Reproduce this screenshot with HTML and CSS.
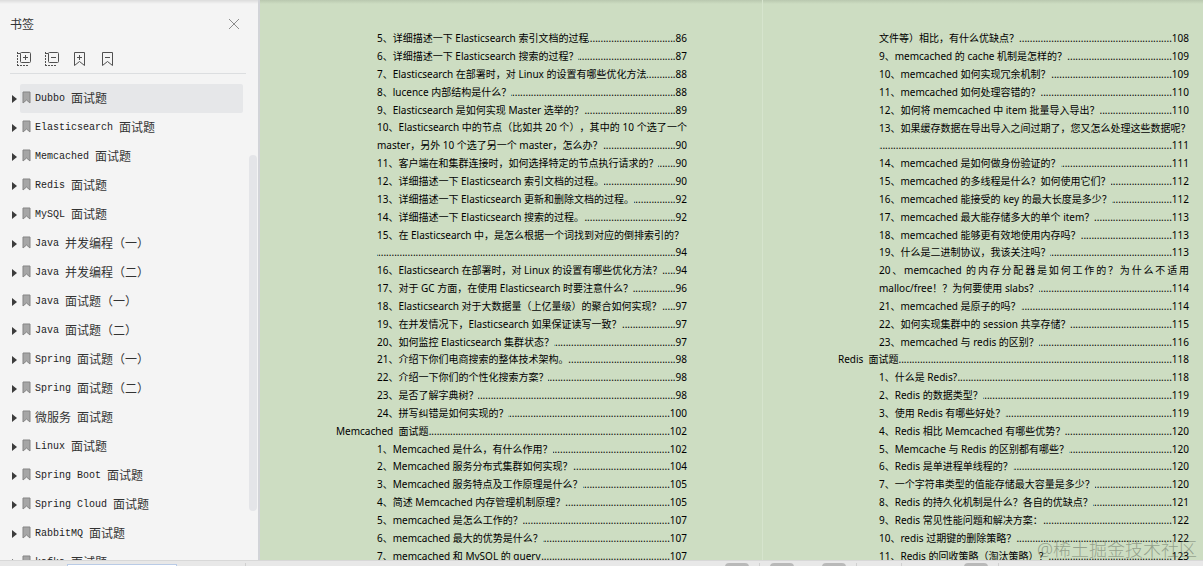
FILE: index.html
```html
<!DOCTYPE html>
<html lang="zh-CN">
<head>
  <meta charset="UTF-8">
  <meta name="viewport" content="width=device-width, initial-scale=1.0">
  <title>书签</title>
  <link rel="stylesheet" href="styles.css">
</head>
<body>
<!-- Shared icons -->
<svg class="sprite" aria-hidden="true">
  <symbol id="mark" viewBox="0 0 9 13">
    <path d="M1 1h7v11L4.500 9 1 12z" fill="#a6a6a6" stroke="#858585"/>
  </symbol>
  <symbol id="arrow" viewBox="0 0 5 8">
    <path d="M0 0l5 4-5 4z" fill="#3c3c3c"/>
  </symbol>
</svg>

<div class="viewer">
  <aside class="sidebar">
    <header class="side-head">
      <h1>书签</h1>
      <button class="close" aria-label="关闭">
        <svg width="12" height="12" viewBox="0 0 12 12"><path d="M1 1l10 10M11 1L1 11" stroke="#8c8c8c" fill="none"/></svg>
      </button>
    </header>

    <div class="tools">
      <button aria-label="展开">
        <svg width="16" height="16" viewBox="0 0 16 16" fill="none" stroke="#505050">
          <rect x="4.500" y="1.500" width="10" height="10" rx="1"/>
          <path d="M7 6.500h5M9.500 4v5"/>
          <path d="M1.500 1v14M1 14.500h11" stroke-dasharray="2 1"/><path d="M1 2.500h3"/>
        </svg>
      </button>
      <button aria-label="折叠">
        <svg width="16" height="16" viewBox="0 0 16 16" fill="none" stroke="#505050">
          <rect x="4.500" y="1.500" width="10" height="10" rx="1"/>
          <path d="M7 6.500h5"/>
          <path d="M1.500 1v14M1 14.500h11" stroke-dasharray="2 1"/><path d="M1 2.500h3"/>
        </svg>
      </button>
      <button aria-label="添加书签">
        <svg width="16" height="16" viewBox="0 0 16 16" fill="none" stroke="#505050">
          <path d="M2.500 1.500h10v13l-5-4-5 4zM5 6.500h5M7.500 4v5"/>
        </svg>
      </button>
      <button aria-label="删除书签">
        <svg width="16" height="16" viewBox="0 0 16 16" fill="none" stroke="#505050">
          <path d="M2.500 1.500h10v13l-5-4-5 4zM5 6.500h5"/>
        </svg>
      </button>
    </div>

    <ul class="tree">
      <li><svg class="arrow"><use href="#arrow"/></svg><a href="#" class="active"><svg class="mark"><use href="#mark"/></svg><span class="en">Dubbo </span>面试题</a></li>
      <li><svg class="arrow"><use href="#arrow"/></svg><a href="#"><svg class="mark"><use href="#mark"/></svg><span class="en">Elasticsearch </span>面试题</a></li>
      <li><svg class="arrow"><use href="#arrow"/></svg><a href="#"><svg class="mark"><use href="#mark"/></svg><span class="en">Memcached </span>面试题</a></li>
      <li><svg class="arrow"><use href="#arrow"/></svg><a href="#"><svg class="mark"><use href="#mark"/></svg><span class="en">Redis </span>面试题</a></li>
      <li><svg class="arrow"><use href="#arrow"/></svg><a href="#"><svg class="mark"><use href="#mark"/></svg><span class="en">MySQL </span>面试题</a></li>
      <li><svg class="arrow"><use href="#arrow"/></svg><a href="#"><svg class="mark"><use href="#mark"/></svg><span class="en">Java </span>并发编程（一）</a></li>
      <li><svg class="arrow"><use href="#arrow"/></svg><a href="#"><svg class="mark"><use href="#mark"/></svg><span class="en">Java </span>并发编程（二）</a></li>
      <li><svg class="arrow"><use href="#arrow"/></svg><a href="#"><svg class="mark"><use href="#mark"/></svg><span class="en">Java </span>面试题（一）</a></li>
      <li><svg class="arrow"><use href="#arrow"/></svg><a href="#"><svg class="mark"><use href="#mark"/></svg><span class="en">Java </span>面试题（二）</a></li>
      <li><svg class="arrow"><use href="#arrow"/></svg><a href="#"><svg class="mark"><use href="#mark"/></svg><span class="en">Spring </span>面试题（一）</a></li>
      <li><svg class="arrow"><use href="#arrow"/></svg><a href="#"><svg class="mark"><use href="#mark"/></svg><span class="en">Spring </span>面试题（二）</a></li>
      <li><svg class="arrow"><use href="#arrow"/></svg><a href="#"><svg class="mark"><use href="#mark"/></svg>微服务<span class="en"> </span>面试题</a></li>
      <li><svg class="arrow"><use href="#arrow"/></svg><a href="#"><svg class="mark"><use href="#mark"/></svg><span class="en">Linux </span>面试题</a></li>
      <li><svg class="arrow"><use href="#arrow"/></svg><a href="#"><svg class="mark"><use href="#mark"/></svg><span class="en">Spring Boot </span>面试题</a></li>
      <li><svg class="arrow"><use href="#arrow"/></svg><a href="#"><svg class="mark"><use href="#mark"/></svg><span class="en">Spring Cloud </span>面试题</a></li>
      <li><svg class="arrow"><use href="#arrow"/></svg><a href="#"><svg class="mark"><use href="#mark"/></svg><span class="en">RabbitMQ </span>面试题</a></li>
      <li><svg class="arrow"><use href="#arrow"/></svg><a href="#"><svg class="mark"><use href="#mark"/></svg><span class="en">kafka </span>面试题</a></li>
    </ul>
    <div class="scroll-thumb"></div>
  </aside>

  <main class="pages">
    <section class="page">
      <ol class="toc">
        <li><span>5、详细描述一下 Elasticsearch 索引文档的过程</span><i></i><b>86</b></li>
        <li><span>6、详细描述一下 Elasticsearch 搜索的过程？</span><i></i><b>87</b></li>
        <li><span>7、Elasticsearch 在部署时，对 Linux 的设置有哪些优化方法</span><i></i><b>88</b></li>
        <li><span>8、lucence 内部结构是什么？</span><i></i><b>88</b></li>
        <li><span>9、Elasticsearch 是如何实现 Master 选举的？</span><i></i><b>89</b></li>
        <li class="full">10、Elasticsearch 中的节点（比如共 20 个），其中的 10 个选了一个</li>
        <li><span>master，另外 10 个选了另一个 master，怎么办？</span><i></i><b>90</b></li>
        <li><span>11、客户端在和集群连接时，如何选择特定的节点执行请求的？</span><i></i><b>90</b></li>
        <li><span>12、详细描述一下 Elasticsearch 索引文档的过程。</span><i></i><b>90</b></li>
        <li><span>13、详细描述一下 Elasticsearch 更新和删除文档的过程。</span><i></i><b>92</b></li>
        <li><span>14、详细描述一下 Elasticsearch 搜索的过程。</span><i></i><b>92</b></li>
        <li><span>15、在 Elasticsearch 中，是怎么根据一个词找到对应的倒排索引的？</span></li>
        <li><i></i><b>94</b></li>
        <li><span>16、Elasticsearch 在部署时，对 Linux 的设置有哪些优化方法？</span><i></i><b>94</b></li>
        <li><span>17、对于 GC 方面，在使用 Elasticsearch 时要注意什么？</span><i></i><b>96</b></li>
        <li><span>18、Elasticsearch 对于大数据量（上亿量级）的聚合如何实现？</span><i></i><b>97</b></li>
        <li><span>19、在并发情况下，Elasticsearch 如果保证读写一致？</span><i></i><b>97</b></li>
        <li><span>20、如何监控 Elasticsearch 集群状态？</span><i></i><b>97</b></li>
        <li><span>21、介绍下你们电商搜索的整体技术架构。</span><i></i><b>98</b></li>
        <li><span>22、介绍一下你们的个性化搜索方案？</span><i></i><b>98</b></li>
        <li><span>23、是否了解字典树？</span><i></i><b>98</b></li>
        <li><span>24、拼写纠错是如何实现的？</span><i></i><b>100</b></li>
        <li class="chapter"><span>Memcached &nbsp;面试题</span><i></i><b>102</b></li>
        <li><span>1、Memcached 是什么，有什么作用？</span><i></i><b>102</b></li>
        <li><span>2、Memcached 服务分布式集群如何实现？</span><i></i><b>104</b></li>
        <li><span>3、Memcached 服务特点及工作原理是什么？</span><i></i><b>105</b></li>
        <li><span>4、简述 Memcached 内存管理机制原理？</span><i></i><b>105</b></li>
        <li><span>5、memcached 是怎么工作的？</span><i></i><b>107</b></li>
        <li><span>6、memcached 最大的优势是什么？</span><i></i><b>107</b></li>
        <li><span>7、memcached 和 MySQL 的 query</span><i></i><b>107</b></li>
      </ol>
    </section>

    <section class="page">
      <ol class="toc">
        <li><span>文件等）相比，有什么优缺点？</span><i></i><b>108</b></li>
        <li><span>9、memcached 的 cache 机制是怎样的？</span><i></i><b>109</b></li>
        <li><span>10、memcached 如何实现冗余机制？</span><i></i><b>109</b></li>
        <li><span>11、memcached 如何处理容错的？</span><i></i><b>110</b></li>
        <li><span>12、如何将 memcached 中 item 批量导入导出？</span><i></i><b>110</b></li>
        <li><span>13、如果缓存数据在导出导入之间过期了，您又怎么处理这些数据呢？</span></li>
        <li><i></i><b>111</b></li>
        <li><span>14、memcached 是如何做身份验证的？</span><i></i><b>111</b></li>
        <li><span>15、memcached 的多线程是什么？如何使用它们？</span><i></i><b>112</b></li>
        <li><span>16、memcached 能接受的 key 的最大长度是多少？</span><i></i><b>112</b></li>
        <li><span>17、memcached 最大能存储多大的单个 item？</span><i></i><b>113</b></li>
        <li><span>18、memcached 能够更有效地使用内存吗？</span><i></i><b>113</b></li>
        <li><span>19、什么是二进制协议，我该关注吗？</span><i></i><b>113</b></li>
        <li class="full">20、memcached 的内存分配器是如何工作的？为什么不适用</li>
        <li><span>malloc/free！？为何要使用 slabs？</span><i></i><b>114</b></li>
        <li><span>21、memcached 是原子的吗？</span><i></i><b>114</b></li>
        <li><span>22、如何实现集群中的 session 共享存储？</span><i></i><b>115</b></li>
        <li><span>23、memcached 与 redis 的区别？</span><i></i><b>116</b></li>
        <li class="chapter"><span>Redis &nbsp;面试题</span><i></i><b>118</b></li>
        <li><span>1、什么是 Redis?</span><i></i><b>118</b></li>
        <li><span>2、Redis 的数据类型？</span><i></i><b>119</b></li>
        <li><span>3、使用 Redis 有哪些好处？</span><i></i><b>119</b></li>
        <li><span>4、Redis 相比 Memcached 有哪些优势？</span><i></i><b>120</b></li>
        <li><span>5、Memcache 与 Redis 的区别都有哪些？</span><i></i><b>120</b></li>
        <li><span>6、Redis 是单进程单线程的？</span><i></i><b>120</b></li>
        <li><span>7、一个字符串类型的值能存储最大容量是多少？</span><i></i><b>120</b></li>
        <li><span>8、Redis 的持久化机制是什么？各自的优缺点？</span><i></i><b>121</b></li>
        <li><span>9、Redis 常见性能问题和解决方案：</span><i></i><b>122</b></li>
        <li><span>10、redis 过期键的删除策略？</span><i></i><b>122</b></li>
        <li><span>11、Redis 的回收策略（淘汰策略）？</span><i></i><b>123</b></li>
      </ol>
    </section>
    <div class="watermark">@稀土掘金技术社区</div>
  </main>
</div>

<footer class="statusbar">
  <input class="page-input" type="text" aria-label="页码">
  <hr>
  <div class="status-tools">
    <button aria-label="单页"></button>
    <hr>
    <button aria-label="双页"></button>
    <button class="group" aria-label="连续"></button>
    <hr>
    <hr class="zoom-start">
    <button class="zoom" aria-label="缩放"></button>
    <hr>
  </div>
</footer>
</body>
</html>
```
FILE: styles.css
```css
* {
  box-sizing: border-box;
}

body {
  margin: 0;
  height: 100vh;
  display: flex;
  flex-direction: column;
  overflow: hidden;
  background: #e7e7e7;
  font-family: "Noto Sans", "Noto Sans CJK SC", sans-serif;
}

ul, ol {
  margin: 0;
  padding: 0;
  list-style: none;
}

button {
  padding: 0;
  border: none;
  background: none;
  cursor: pointer;
}

svg {
  display: block;
  flex: none;
}

.sprite {
  position: absolute;
  width: 0;
  height: 0;
}

.viewer {
  flex: 1;
  min-height: 0;
  display: flex;
}

/* Bookmark panel */
.sidebar {
  position: relative;
  flex: none;
  width: 260px;
  overflow: hidden;
  background: linear-gradient(#dcdcdc, #f4f4f4 4px);
  border-right: 2px solid #d2d4d8;
  color: #333;
  font-size: 12px;
}

.side-head {
  display: flex;
  justify-content: space-between;
  align-items: center;
  height: 48px;
  padding: 0 18px 0 10px;
}

.side-head h1 {
  margin: 0;
  font-size: 12px;
  font-weight: normal;
}

.tools {
  display: flex;
  gap: 12px;
  height: 26px;
  margin: 0 12px 10px 10px;
  padding: 3px 6px 0;
  border-bottom: 1px solid #dcdee0;
}

.tools button {
  width: 16px;
  height: 16px;
}

.tree li {
  display: flex;
  align-items: center;
  height: 29px;
  padding: 0 15px 0 12px;
}

.arrow {
  width: 5px;
  height: 8px;
}

.mark {
  width: 9px;
  height: 13px;
  margin-right: 4px;
}

.tree a {
  flex: 1;
  display: flex;
  align-items: center;
  height: 29px;
  margin-left: 3px;
  padding: 0 0 2px 2px;
  border-radius: 2px;
  color: #333;
  text-decoration: none;
}

.tree a.active {
  background: #e6e7e9;
}

.en {
  padding-top: 2px;
  font-family: "Liberation Mono", monospace;
  font-size: 10px;
  color: #222;
  white-space: pre;
}

.scroll-thumb {
  position: absolute;
  top: 155px;
  right: 1px;
  bottom: 49px;
  width: 8px;
  border-radius: 4px;
  background: #e4e5e8;
}

/* Document */
.pages {
  position: relative;
  flex: 1;
  display: flex;
  overflow: hidden;
  background: linear-gradient(#b9c8af, #cdddc2 4px);
}

.page {
  flex: 1;
  display: flex;
  padding: 30px 75px 0 76px;
}

.page + .page {
  flex: none;
  width: 441px;
  padding: 30px 14px 0 75px;
  border-left: 1px solid #d6e4cd;
}

/* last line runs under the status bar */
.toc {
  flex: 1;
  display: grid;
  grid-auto-rows: 1fr;
  margin-bottom: -5px;
  font-size: 10px;
  line-height: 17px;
  color: #000;
  white-space: nowrap;
  text-spacing-trim: space-all;
}

.toc li {
  display: flex;
  align-items: center;
  min-width: 0;
  padding-left: 41px;
}

.toc .chapter {
  padding-left: 0;
}

.toc .full {
  display: block;
  text-align-last: justify;
}

.toc i {
  flex: 1;
  width: 0;
  height: 17px;
  overflow: hidden;
  direction: rtl;
  font-style: normal;
}

.toc i::before {
  content: "........................................................................................................................................................";
}

.toc b {
  font-weight: normal;
}

.watermark {
  position: absolute;
  right: 6px;
  bottom: -1px;
  font-size: 18px;
  font-weight: 300;
  line-height: 24px;
  color: rgba(90, 100, 85, 0.5);
}

/* Status bar */
.statusbar {
  flex: none;
  display: flex;
  align-items: flex-start;
  height: 6px;
  padding: 2px 204px 0 67px;
  overflow: hidden;
  border-top: 1px solid #d8d8d8;
  background: #e8e8e8;
}

.page-input {
  width: 110px;
  height: 20px;
  margin: 1px 68px 0 0;
  border: 1px solid #b9cbe6;
  background: #fff;
}

.status-tools {
  display: flex;
  gap: 10px;
  margin-left: auto;
}

.status-tools button {
  width: 24px;
  height: 20px;
  border-radius: 4px;
  background: #b9b9b9;
}

.status-tools .group {
  margin-left: 18px;
}

.status-tools .zoom-start {
  margin-left: 34px;
}

.status-tools .zoom {
  margin-left: 52px;
}

.statusbar hr {
  width: 1px;
  height: 20px;
  margin: 0;
  border: none;
  background: #d0d0d0;
}
```
